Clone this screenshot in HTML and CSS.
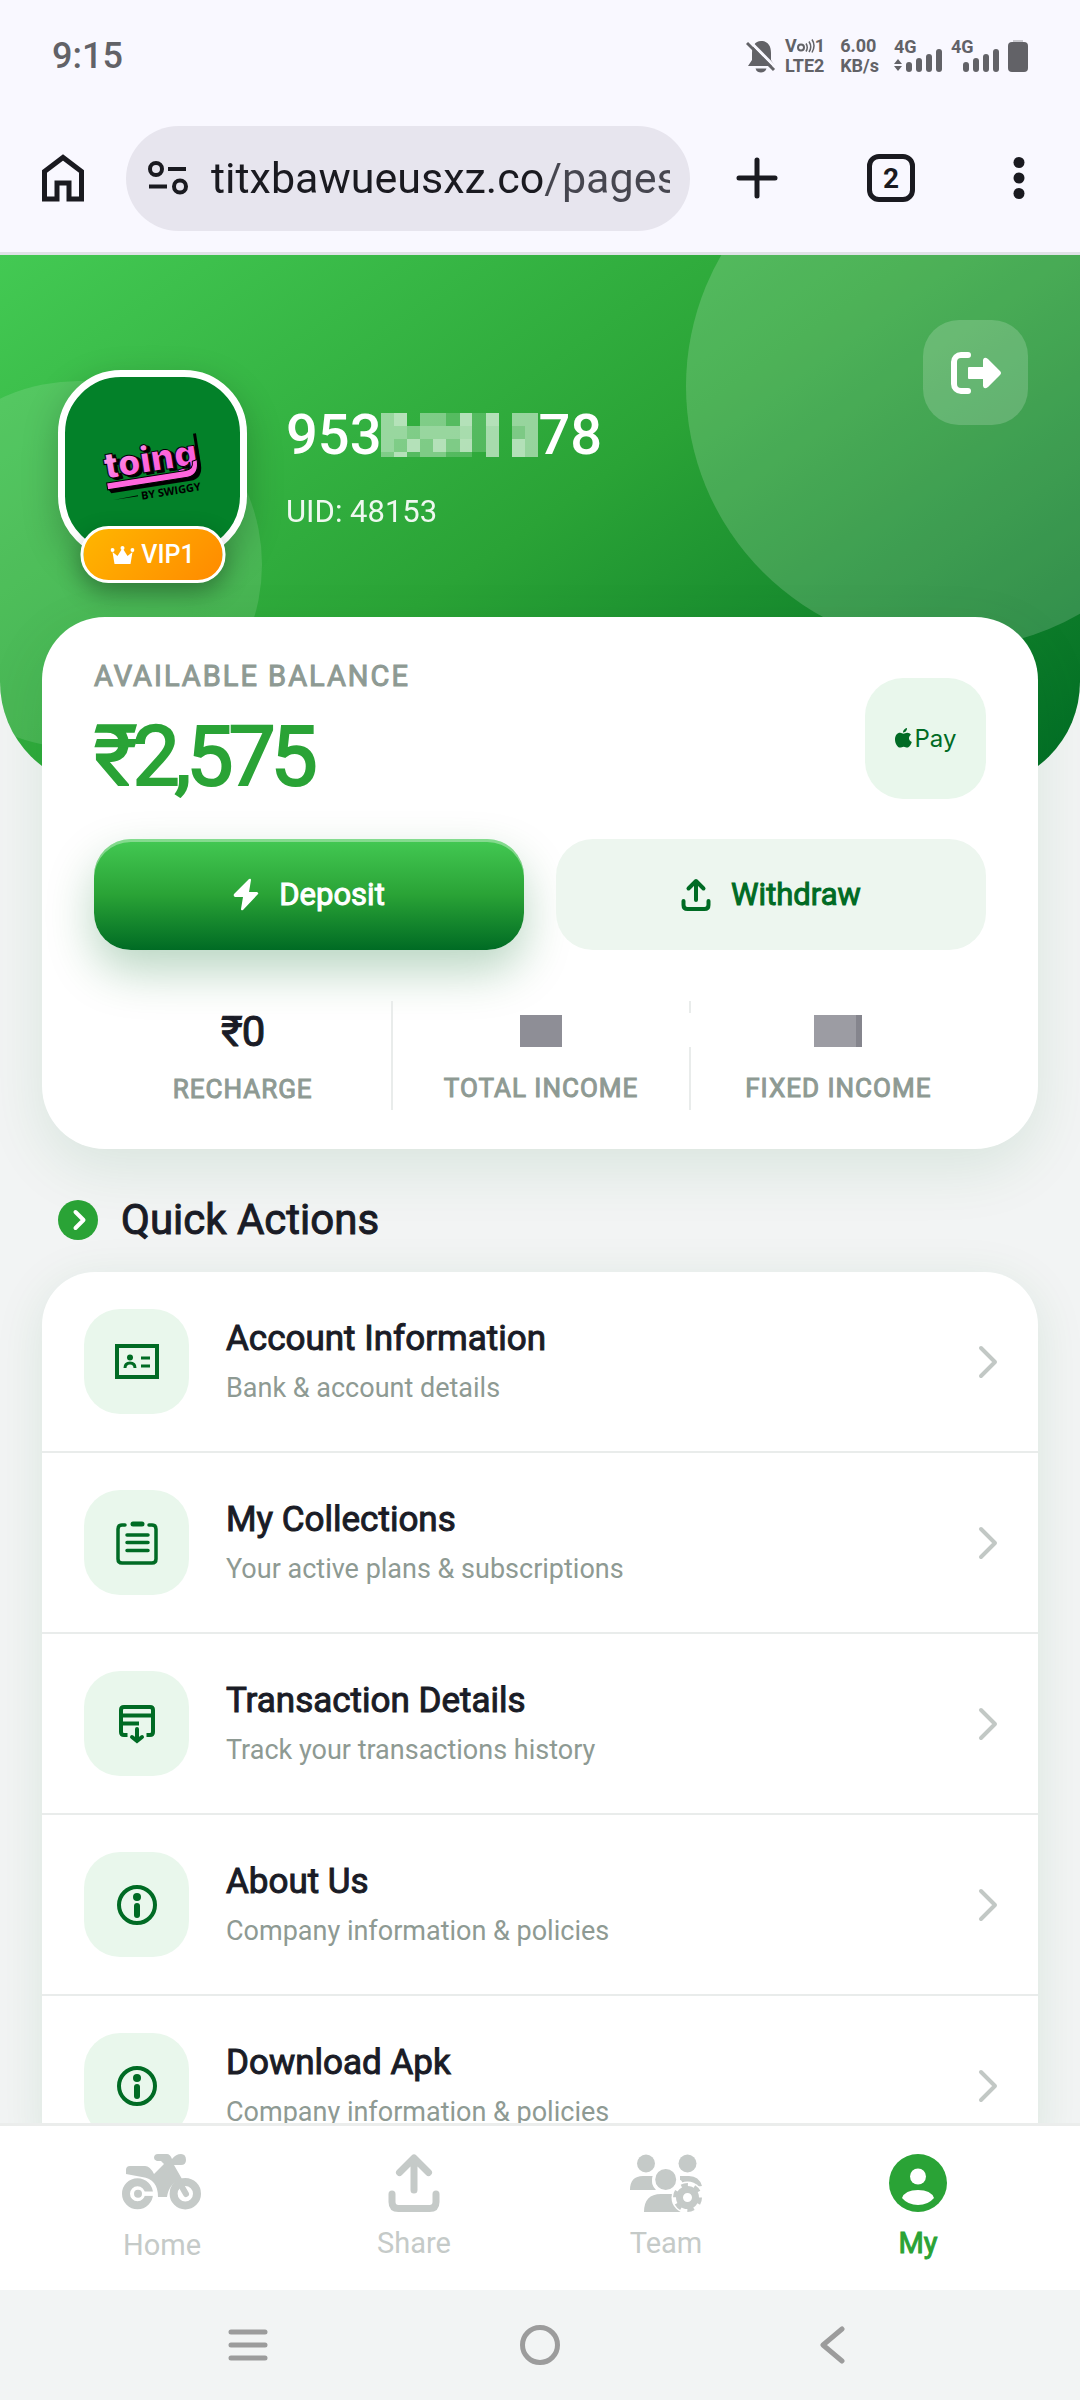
FILE: index.html
```html
<!DOCTYPE html>
<html lang="en">
<head>
<meta charset="utf-8">
<meta name="viewport" content="width=device-width, initial-scale=1">
<title>My account</title>
<link rel="stylesheet" href="styles.css">
</head>
<body>
<div class="status">
  <span class="clock">9:15</span>
  <div class="status-icons">
    <svg class="bell" width="30" height="34" viewBox="0 0 30 34"><path d="M15 2c7 0 10 5 10 12v7l4 6H2l4-6v-7C6 7 9 2 15 2z" fill="currentColor"/><path d="M9.500 29.500h11c-1 3-3 4-5.500 4s-4.500-1-5.500-4z" fill="currentColor"/><path d="M3.500 2L31 30" stroke="#f9f8ff" stroke-width="3"/><path d="M1 4l27 27" stroke="currentColor" stroke-width="3"/></svg>
    <div class="pair"><span class="volte">V<svg width="18" height="14" viewBox="0 0 18 14" fill="none" stroke="currentColor" stroke-width="2"><circle cx="4" cy="8.500" r="3"/><path d="M9 4.500q2.500 4 0 8M12 2.500q3.500 5.500 0 10.500M15 .5q4 6 0 13" stroke-width="1.500"/></svg>1</span><span>LTE2</span></div>
    <div class="pair"><span>6.00</span><span>KB/s</span></div>
    <div class="signal"><span>4G</span><svg width="48" height="24" viewBox="0 0 48 24" fill="currentColor"><path d="M0 15l4-5 4 5zM0 17h8l-4 5z"/><rect x="12" y="13" width="6" height="10" rx="3"/><rect x="22" y="9" width="6" height="14" rx="3"/><rect x="32" y="5" width="6" height="18" rx="3"/><rect x="42" y="0" width="6" height="23" rx="3"/></svg></div>
    <div class="signal"><span>4G</span><svg width="48" height="24" viewBox="0 0 48 24" fill="currentColor"><rect x="12" y="13" width="6" height="10" rx="3"/><rect x="22" y="9" width="6" height="14" rx="3"/><rect x="32" y="5" width="6" height="18" rx="3"/><rect x="42" y="0" width="6" height="23" rx="3"/></svg></div>
    <svg class="battery" width="20" height="34" viewBox="0 0 20 34"><path d="M5 1h10v3H5z" fill="#c9c9cf"/><rect y="3" width="20" height="30" rx="4" fill="currentColor"/></svg>
  </div>
</div>
<div class="browser">
  <button class="tool" aria-label="Home page"><svg width="44" height="50" viewBox="0 0 44 50" fill="none" stroke="currentColor" stroke-width="5"><path d="M3.500 18.500L22 4.500l18.500 14V46H28V30H16v16H3.500z"/></svg></button>
  <div class="address">
    <svg width="40" height="34" viewBox="0 0 40 34" fill="none" stroke="currentColor" stroke-width="4"><circle cx="8" cy="8" r="6"/><path d="M20 8h18M1 25.500h18"/><circle cx="32" cy="25.500" r="6"/></svg>
    <input type="text" aria-label="Address" value="titxbawueusxz.co/pages">
  </div>
  <button class="tool wide" aria-label="New tab"><svg width="42" height="42" viewBox="0 0 42 42" fill="none" stroke="currentColor" stroke-width="5" stroke-linecap="round"><path d="M21 3v36M3 21h36"/></svg></button>
  <button class="tool wide" aria-label="Tabs"><span class="tabs">2</span></button>
  <button class="tool menu" aria-label="Menu"><svg width="12" height="42" viewBox="0 0 12 42" fill="currentColor"><circle cx="6" cy="5.500" r="5.500"/><circle cx="6" cy="21" r="5.500"/><circle cx="6" cy="36.500" r="5.500"/></svg></button>
</div>

<main class="page">
  <header class="hero">
    <button class="logout" aria-label="Log out"><svg width="52" height="44" viewBox="0 0 52 44"><path d="M18 4h-7a7 7 0 0 0-7 7v22a7 7 0 0 0 7 7h7" fill="none" stroke="#fff" stroke-width="6" stroke-linecap="round"/><path d="M18 17q0-1 1-1h14V9q1-4 5-1l12 12q2 2 0 4L38 36q-4 3-5-1v-7H19q-1 0-1-1z" fill="#fff"/></svg></button>
    <div class="profile">
      <div class="avatar">
        <svg class="logo" viewBox="0 0 175 175" role="img" aria-label="toing by Swiggy">
          <defs><linearGradient id="pink" x1="0" y1="0" x2="1" y2="1"><stop offset="0" stop-color="#f9b5ee"/><stop offset=".5" stop-color="#ff66dd"/><stop offset="1" stop-color="#f55ade"/></linearGradient></defs>
          <g transform="translate(41 102) rotate(-9)">
            <path d="M1 11h80q12 0 12-12v-30h3V0q0 15-13 15H3z" fill="#000"/>
            <text class="logo-word" x="3" y="2" fill="#000" stroke="#000">toing</text>
            <text class="logo-word" x="0" y="0" fill="url(#pink)" stroke="#000">toing</text>
            <path d="M0 4h80q8 0 8-8l5-1q0 16-12 16H0z" fill="#ff66dd" stroke="#000" stroke-width="1"/>
            <text class="logo-tag" x="32" y="26">BY SWIGGY</text>
            <path d="M4 22l25-1v1z" fill="#000"/>
          </g>
        </svg>
        <span class="vip"><svg width="24" height="20" viewBox="0 0 24 20" fill="#fff"><path d="M4 19L2 7l5 4 5-8 5 8 5-4-2 12z"/><circle cx="2" cy="5" r="2"/><circle cx="12" cy="3" r="2"/><circle cx="22" cy="5" r="2"/></svg>VIP1</span>
      </div>
      <div class="who">
        <h1>953<svg width="157" height="44" viewBox="0 0 157 44" fill="#fff" shape-rendering="crispEdges" role="img" aria-label="hidden digits"><path opacity=".5" d="M0 0h13v39H0zM13 13h13v13H13zM39 13h26v13H39zM131 0h26v13h-26zM65 13h14v13H65zM144 13h13v31h-13z"/><path opacity=".64" d="M13 0h13v13H13zM13 39h13v5H13zM79 0h12v13H79zM79 26h12v13H79zM105 0h13v13h-13zM26 26h13v13H26zM52 26h13v13H52zM131 26h13v18h-13z"/><path opacity=".38" d="M39 0h26v13H39zM26 13h13v13H26zM13 26h13v13H13zM39 26h13v18H39zM65 26h14v13H65zM0 39h13v5H0zM52 39h13v5H52zM131 13h13v13h-13z"/><path opacity=".58" d="M79 13h12v13H79zM105 13h13v31h-13z"/><path opacity=".18" d="M65 0h14v13H65zM26 39h13v5H26zM65 39h26v5H65zM91 0h14v39H91z"/></svg>78</h1>
        <p>UID: 48153</p>
      </div>
    </div>
  </header>

  <section class="card balance">
    <div class="balance-top">
      <div>
        <p class="caption">AVAILABLE BALANCE</p>
        <p class="amount">₹2,575</p>
      </div>
      <button class="pay" aria-label="Apple Pay"><svg width="17" height="20" viewBox="0 0 17 20" fill="currentColor"><path d="M12 0c.3 2-1.500 4.500-4 4.600C7.800 2.500 9.700.4 12 0zM8.500 5.800c1 0 2-1 3.800-1 1.500 0 2.900.8 3.700 2-3 1.800-2.600 5.800.8 7.200-.9 2.700-2.600 5.600-4.500 5.600-1.400 0-2-.8-3.600-.8s-2.200.8-3.600.8C2.500 19.600 0 15.400 0 11.500c0-4.100 2.400-6.700 5-6.700 1.500 0 2.600 1 3.500 1z"/></svg>Pay</button>
    </div>
    <div class="buttons">
      <button class="btn primary"><svg width="26" height="34" viewBox="0 0 26 34" fill="#fff"><path d="M16 1q2-1 2 1l-2 12h8q2 1 1 2L10 32q-2 1-2-1l2-12H2q-2-1-1-3z"/></svg>Deposit</button>
      <button class="btn soft"><svg width="30" height="34" viewBox="0 0 30 34" fill="none" stroke="currentColor" stroke-width="4" stroke-linecap="round" stroke-linejoin="round"><path d="M15 22V4M7.500 10.500L15 3l7.500 7.500M2.500 23v4q0 4 4 4h17q4 0 4-4v-4"/></svg>Withdraw</button>
    </div>
    <div class="stats">
      <div class="stat"><b>₹0</b><span>RECHARGE</span></div>
      <div class="stat"><b><i class="mask one"></i></b><span>TOTAL INCOME</span></div>
      <div class="stat broken"><b><i class="mask two"></i></b><span>FIXED INCOME</span></div>
    </div>
  </section>

  <h2 class="heading"><svg width="40" height="40" viewBox="0 0 40 40"><circle cx="20" cy="20" r="20" fill="#2aa336"/><path d="M17.500 12l8 8-8 8" fill="none" stroke="#fff" stroke-width="4" stroke-linecap="round" stroke-linejoin="round"/></svg>Quick Actions</h2>

  <nav class="card list" aria-label="Quick actions">
    <a class="row" href="#account">
      <span class="tile"><svg width="44" height="36" viewBox="0 0 44 36" fill="none" stroke="currentColor" stroke-width="4"><path d="M2 2h40v31H2z"/><circle cx="15" cy="13.500" r="3" fill="currentColor" stroke="none"/><path d="M10 24q0-5 5-5t5 5M26 14h9M26 22h9" stroke-width="3"/></svg></span>
      <span class="text"><strong>Account Information</strong><small>Bank &amp; account details</small></span>
      <svg class="chev" width="20" height="34" viewBox="0 0 20 34"><path d="M3 3l14 14L3 31"/></svg>
    </a>
    <a class="row" href="#collections">
      <span class="tile"><svg width="42" height="46" viewBox="0 0 42 46" fill="none" stroke="currentColor" stroke-width="3.500" stroke-linecap="round"><path d="M9 5H6Q2 5 2 9v30q0 4 4 4h30q4 0 4-4V9q0-4-4-4h-3M11 15h21M11 22.500h21M11 30.500h21"/><path d="M17 4h9" stroke-width="5"/></svg></span>
      <span class="text"><strong>My Collections</strong><small>Your active plans &amp; subscriptions</small></span>
      <svg class="chev" width="20" height="34" viewBox="0 0 20 34"><path d="M3 3l14 14L3 31"/></svg>
    </a>
    <a class="row" href="#transactions">
      <span class="tile"><svg width="38" height="40" viewBox="0 0 38 40" fill="none" stroke="currentColor" stroke-width="4"><path d="M9.500 31H6q-3 0-3-3V6q0-3 3-3h26q3 0 3 3v22q0 3-3 3h-3.500M3 11.500h32M3 19.500h18"/><path d="M19 25v11M14 33l5 4 5-4" stroke-linecap="round"/></svg></span>
      <span class="text"><strong>Transaction Details</strong><small>Track your transactions history</small></span>
      <svg class="chev" width="20" height="34" viewBox="0 0 20 34"><path d="M3 3l14 14L3 31"/></svg>
    </a>
    <a class="row" href="#about">
      <span class="tile"><svg width="40" height="40" viewBox="0 0 40 40"><circle cx="20" cy="20" r="18" fill="none" stroke="currentColor" stroke-width="4"/><circle cx="20" cy="12" r="4" fill="currentColor"/><rect x="17" y="18" width="6" height="15" rx="3" fill="currentColor"/></svg></span>
      <span class="text"><strong>About Us</strong><small>Company information &amp; policies</small></span>
      <svg class="chev" width="20" height="34" viewBox="0 0 20 34"><path d="M3 3l14 14L3 31"/></svg>
    </a>
    <a class="row" href="#apk">
      <span class="tile"><svg width="40" height="40" viewBox="0 0 40 40"><circle cx="20" cy="20" r="18" fill="none" stroke="currentColor" stroke-width="4"/><circle cx="20" cy="12" r="4" fill="currentColor"/><rect x="17" y="18" width="6" height="15" rx="3" fill="currentColor"/></svg></span>
      <span class="text"><strong>Download Apk</strong><small>Company information &amp; policies</small></span>
      <svg class="chev" width="20" height="34" viewBox="0 0 20 34"><path d="M3 3l14 14L3 31"/></svg>
    </a>
  </nav>
</main>

<nav class="tabbar" aria-label="Main">
  <a href="#home"><svg width="80" height="60" viewBox="0 0 80 60" fill="#c5cac8"><path d="M4 20v-4q0-4 4-4h15q5 0 9 8l10-10-3-3h-4q-3-1-3-3 0-4 4-4h9q3 0 5 5 4-5 9-5 5 0 5 6 0 5-5 5h-7l8 14q-13 4-15 18h-9q0-18-16-20z"/><circle cx="15.500" cy="39.700" r="11.500" fill="none" stroke="#c5cac8" stroke-width="8"/><path d="M15.500 37.500H34v4.400H15.500z" fill="#fff"/><circle cx="16" cy="39.700" r="4"/><circle cx="63.300" cy="39.700" r="11.700" fill="none" stroke="#c5cac8" stroke-width="8"/><path d="M60 33l4 7" stroke="#c5cac8" stroke-width="6" stroke-linecap="round"/></svg>Home</a>
  <a href="#share"><svg width="52" height="58" viewBox="0 0 52 58" fill="none" stroke="#c5cac8" stroke-width="7" stroke-linecap="round" stroke-linejoin="round"><path d="M26 36V5M11.500 18.500L26 4l14.500 14.500M4 40v8q0 6.500 6.500 6.500h31q6.500 0 6.500-6.500v-8"/></svg>Share</a>
  <a href="#team"><svg width="72" height="58" viewBox="0 0 72 58"><g fill="#c5cac8"><circle cx="16" cy="9.500" r="9"/><circle cx="57.500" cy="9.500" r="9"/><path d="M0 36q0-14 13-14h10q-3 8 3 14zM50 22h9q10 0 13 10l-7 1-5-4-7 2q-1-5-3-5z"/></g><circle cx="35.700" cy="25.500" r="12" fill="#c5cac8" stroke="#fff" stroke-width="3"/><path fill="#c5cac8" d="M14 58q0-18 17-18h12q-1 4 2 5-3 7 8 13z"/><circle cx="57.500" cy="43.500" r="16" fill="#fff"/><circle cx="57.500" cy="43.500" r="8" fill="none" stroke="#c5cac8" stroke-width="7"/><circle cx="57.500" cy="43.500" r="12" fill="none" stroke="#c5cac8" stroke-width="5" stroke-dasharray="6.300 6.270"/></svg>Team</a>
  <a class="active" href="#my" aria-current="page"><svg width="58" height="58" viewBox="0 0 58 58"><circle cx="29" cy="29" r="29" fill="#2aa336"/><circle cx="29" cy="22.500" r="8" fill="#fff"/><path d="M13 44q3-8 16-8t16 8q-6 7-16 7t-16-7z" fill="#fff"/></svg>My</a>
</nav>
<div class="system">
  <button aria-label="Recent apps"><svg width="40" height="32" viewBox="0 0 40 32" fill="none" stroke="currentColor" stroke-width="5" stroke-linecap="round"><path d="M3 3h34M3 16h34M3 29h34"/></svg></button>
  <button aria-label="Home screen"><svg width="40" height="40" viewBox="0 0 40 40"><circle cx="20" cy="20" r="17.500" fill="none" stroke="currentColor" stroke-width="5"/></svg></button>
  <button aria-label="Back"><svg width="26" height="38" viewBox="0 0 26 38" fill="none" stroke="currentColor" stroke-width="5" stroke-linecap="round" stroke-linejoin="round"><path d="M23 3L4 19l19 16"/></svg></button>
</div>
</body>
</html>
```
FILE: styles.css
```css
* { box-sizing: border-box; margin: 0; padding: 0; }
body {
  height: 100vh;
  display: flex;
  flex-direction: column;
  background: #f2f4f4;
  color: #1a1c26;
  font-family: Roboto, "Noto Sans", sans-serif;
}
button { border: 0; background: none; color: inherit; font: inherit; cursor: pointer; }
a { color: inherit; text-decoration: none; }
svg { display: block; flex: none; }

/* phone status bar */
.status {
  flex: none;
  height: 112px;
  padding: 0 52px;
  display: flex;
  align-items: center;
  justify-content: space-between;
  background: #f9f8ff;
  color: #626267;
}
.clock { font-size: 36px; font-weight: 500; }
.status-icons { display: flex; align-items: center; gap: 9px; }
.pair {
  display: flex;
  flex-direction: column;
  margin-right: 6px;
  font-size: 18px;
  line-height: 20px;
  font-weight: 700;
}
.volte { display: flex; align-items: center; }
.signal { display: flex; flex-direction: column; font-size: 18px; line-height: 13px; font-weight: 700; }
.signal svg { align-self: flex-end; margin-top: -4px; }

/* browser toolbar */
.browser {
  flex: none;
  height: 143px;
  padding-bottom: 8px;
  display: flex;
  align-items: center;
  background: #f9f8ff;
  border-bottom: 3px solid #dfe2e6;
  color: #1a1a20;
}
.tool { display: flex; align-items: center; justify-content: center; width: 126px; height: 100px; }
.tool.wide { width: 134px; }
.tool.menu { width: 122px; }
.address {
  flex: 1;
  min-width: 0;
  height: 105px;
  padding: 0 20px 0 22px;
  display: flex;
  align-items: center;
  gap: 23px;
  border-radius: 53px;
  background: #e7e5ee;
}
.address input {
  flex: 1;
  min-width: 0;
  border: 0;
  outline: 0;
  font: 43px Roboto, sans-serif;
  background: linear-gradient(90deg, #1a1a20 0 333px, #46464f 333px);
  background-clip: text;
  -webkit-background-clip: text;
  color: transparent;
}
.tabs {
  width: 48px;
  height: 48px;
  display: grid;
  place-items: center;
  border: 5px solid;
  border-radius: 12px;
  font-size: 28px;
  font-weight: 700;
}

/* scrolling page */
.page { flex: 1; min-height: 0; overflow-y: auto; scrollbar-width: none; }
.hero {
  position: relative;
  height: 532px;
  padding: 65px 52px 0 58px;
  overflow: hidden;
  border-radius: 0 0 105px 105px;
  background: linear-gradient(145deg, #43c953 0%, #2aa336 50%, #006b24 100%);
}
.hero::before, .hero::after {
  content: "";
  position: absolute;
  border-radius: 50%;
}
.hero::before { width: 525px; height: 525px; top: -131px; right: -131px; background: rgba(255, 255, 255, .17); }
.hero::after { width: 367px; height: 367px; left: -105px; bottom: 39px; background: rgba(255, 255, 255, .12); }
.logout {
  position: relative;
  z-index: 1;
  display: grid;
  place-items: center;
  width: 105px;
  height: 105px;
  margin-left: auto;
  border-radius: 36px;
  background: rgba(255, 255, 255, .18);
}
.profile { position: relative; z-index: 1; display: flex; align-items: center; gap: 39px; margin-top: -55px; width: max-content; }
.avatar {
  position: relative;
  width: 189px;
  height: 189px;
  border: 7px solid #fff;
  border-radius: 63px;
  background: #038129;
  box-shadow: 0 12px 36px rgba(0, 0, 0, .22);
}
.logo { width: 100%; height: 100%; }
.logo-word { font: 900 36px Inter, sans-serif; stroke-width: 1px; }
.logo-tag { font: 700 11px "Open Sans", sans-serif; }
.vip {
  position: absolute;
  left: 50%;
  bottom: -31px;
  transform: translateX(-50%);
  display: flex;
  align-items: center;
  justify-content: center;
  gap: 7px;
  width: 145px;
  height: 57px;
  border: 3px solid #fff;
  border-radius: 28px;
  background: linear-gradient(135deg, #ffb600, #ff8a00);
  color: #fff;
  font-size: 25px;
  font-weight: 500;
  box-shadow: 0 10px 24px rgba(0, 0, 0, .3);
}
.who { padding-top: 2px; color: #fff; }
.who h1 { display: flex; align-items: center; font-size: 56px; line-height: 66px; font-weight: 500; }
.who p { margin-top: 26px; font-size: 31px; line-height: 36px; opacity: .92; }

.card { margin: 0 42px; background: #fff; box-shadow: 0 20px 60px rgba(0, 107, 36, .1); }
.balance {
  position: relative;
  margin-top: -170px;
  padding: 42px 52px 39px;
  border-radius: 63px;
}
.balance-top { display: flex; align-items: center; justify-content: space-between; }
.caption { color: #8e9a93; font-size: 29px; line-height: 34px; letter-spacing: 2px; -webkit-text-stroke: 1px; }
.amount {
  margin-top: 22px;
  color: #2aa336;
  font-size: 84px;
  line-height: 84px;
  letter-spacing: -5px;
  -webkit-text-stroke: 2px;
}
.pay {
  display: flex;
  align-items: center;
  justify-content: center;
  gap: 3px;
  width: 121px;
  height: 121px;
  margin-top: 18px;
  border-radius: 38px;
  background: #e9f7ec;
  color: #006b24;
  font: 24px Inter, sans-serif;
}
.buttons { display: grid; grid-template-columns: 1fr 1fr; gap: 32px; margin-top: 40px; }
.btn {
  display: flex;
  align-items: center;
  justify-content: center;
  gap: 20px;
  height: 111px;
  border-radius: 37px;
  font-size: 31px;
  -webkit-text-stroke: 1px;
}
.primary {
  background: linear-gradient(180deg, #43c953, #2aa336 50%, #006b24);
  color: #fff;
  box-shadow: 0 21px 47px rgba(0, 107, 36, .28), inset 0 3px 0 rgba(255, 255, 255, .35);
}
.soft { background: #edf6ef; color: #006b24; }
.stats { display: grid; grid-template-columns: repeat(3, 1fr); margin-top: 51px; }
.stat {
  display: flex;
  flex-direction: column;
  align-items: center;
  gap: 14px;
  height: 109px;
  padding-top: 8px;
}
.stat + .stat { border-left: 2px solid #e9eceb; }
.stat + .broken { border-image: linear-gradient(#e9eceb 14px, #fff 14px 46px, #e9eceb 46px) 2; }
.stat b { display: flex; align-items: center; height: 44px; font-size: 42px; font-weight: 400; letter-spacing: -1px; -webkit-text-stroke: 1px; }
.stat span { color: #8e9a93; font-size: 26px; line-height: 44px; letter-spacing: 1px; -webkit-text-stroke: 1px; }
.mask { display: block; height: 32px; background: #8e8e96; }
.one { width: 42px; }
.two { width: 48px; background: linear-gradient(90deg, #9c9ca3 42px, #85858d 42px); }

.heading {
  display: flex;
  align-items: center;
  gap: 23px;
  margin: 46px 58px 28px;
  font-size: 42px;
  line-height: 49px;
  font-weight: 400;
  -webkit-text-stroke: 1px;
}
.list { border-radius: 53px; overflow: hidden; box-shadow: 0 10px 50px rgba(0, 107, 36, .1); }
.row {
  display: flex;
  align-items: center;
  gap: 37px;
  padding: 37px 40px 37px 42px;
  border-bottom: 2px solid #e9eceb;
}
.row:last-child { border-bottom: 0; }
.tile {
  flex: none;
  display: grid;
  place-items: center;
  width: 105px;
  height: 105px;
  border-radius: 36px;
  background: #e9f7ec;
  color: #006b24;
}
.text { flex: 1; display: flex; flex-direction: column; gap: 10px; }
.text strong { font-size: 35px; line-height: 42px; font-weight: 400; -webkit-text-stroke: 1px; }
.text small { color: #8e9a93; font-size: 27px; line-height: 36px; }
.chev { fill: none; stroke: #c2c8c5; stroke-width: 4px; stroke-linecap: round; stroke-linejoin: round; }

/* app tab bar */
.tabbar {
  flex: none;
  display: flex;
  height: 167px;
  padding: 28px 36px 0;
  border-top: 3px solid #ebedec;
  background: #fff;
}
.tabbar a {
  flex: 1;
  display: flex;
  flex-direction: column;
  align-items: center;
  gap: 14px;
  color: #c5cac8;
  font-size: 29px;
  line-height: 34px;
}
.tabbar .active { color: #2aa336; -webkit-text-stroke: 1px; }

/* system navigation */
.system {
  flex: none;
  display: grid;
  grid-template-columns: 80px 80px 80px;
  justify-content: center;
  gap: 212px;
  height: 110px;
  background: #f2f4f4;
  color: #9c9c9c;
}
.system button { display: grid; place-items: center; }
```
